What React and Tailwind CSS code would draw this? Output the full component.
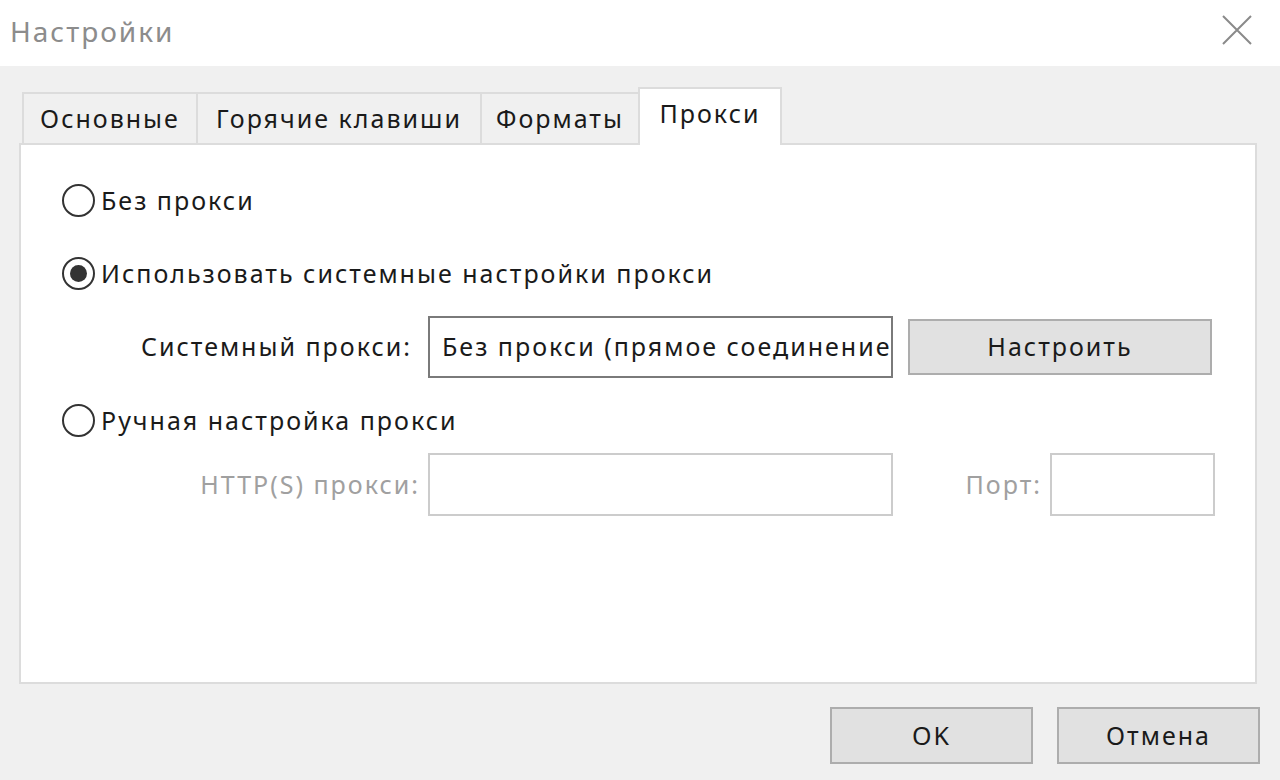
import React from "react";

const font = { fontFamily: '"Noto Sans", "Open Sans", sans-serif' };

function Radio({ checked }) {
  return (
    <span className="relative flex h-[33px] w-[33px] shrink-0 items-center justify-center rounded-full border-2 border-[#333333] bg-white">
      {checked && <span className="h-[17px] w-[17px] rounded-full bg-[#333333]" />}
    </span>
  );
}

export default function App() {
  return (
    <div className="flex h-[780px] w-[1280px] flex-col overflow-hidden bg-[#f0f0f0] tracking-[2px] text-[#1a1a1a]" style={font}>
      {/* title bar */}
      <div className="flex h-[66px] shrink-0 items-start justify-between bg-white pl-[10px] pr-[28px] pt-[15px]">
        <span className="text-[28px] leading-[32px] text-[#8c8c8c]">Настройки</span>
        <svg width="30" height="30" viewBox="0 0 30 30">
          <path d="M1 1 L29 29 M29 1 L1 29" stroke="#8a8a8a" strokeWidth="2" fill="none" />
        </svg>
      </div>

      {/* tabs */}
      <div className="flex h-[77px] shrink-0 items-end pl-[22px]">
        <div className="flex h-[51px] w-[174px] items-center justify-center border-t-2 border-l-2 border-[#dcdcdc] bg-[#f0f0f0] text-[25px]">Основные</div>
        <div className="flex h-[51px] w-[284px] items-center justify-center border-t-2 border-l-2 border-[#dcdcdc] bg-[#f0f0f0] text-[25px]">Горячие клавиши</div>
        <div className="flex h-[51px] w-[158px] items-center justify-center border-t-2 border-l-2 border-[#dcdcdc] bg-[#f0f0f0] text-[25px]">Форматы</div>
        <div className="relative z-10 -mb-[2px] flex h-[58px] w-[144px] items-start justify-center border-x-2 border-t-2 border-[#dcdcdc] bg-white pt-[6px] text-[25px]">Прокси</div>
      </div>

      {/* panel */}
      <div className="ml-[19px] h-[541px] w-[1238px] shrink-0 border-2 border-[#dcdcdc] bg-white pl-[41px] text-[25px]">
        <div className="mt-[39px] flex h-[33px] items-center gap-[6px]">
          <Radio />
          <span>Без прокси</span>
        </div>
        <div className="mt-[40px] flex h-[33px] items-center gap-[6px]">
          <Radio checked />
          <span>Использовать системные настройки прокси</span>
        </div>
        <div className="mt-[26px] flex h-[62px] items-center">
          <span className="w-[366px] pr-[16px] text-right">Системный прокси:</span>
          <div className="flex h-[62px] w-[465px] items-center overflow-hidden whitespace-nowrap border-2 border-[#7a7a7a] pl-[12px]">
            Без прокси (прямое соединение)
          </div>
          <div className="ml-[15px] flex h-[56px] w-[304px] items-center justify-center border-2 border-[#adadad] bg-[#e1e1e1]">
            Настроить
          </div>
        </div>
        <div className="mt-[26px] flex h-[33px] items-center gap-[6px]">
          <Radio />
          <span>Ручная настройка прокси</span>
        </div>
        <div className="mt-[16px] flex h-[63px] items-center">
          <span className="w-[366px] pr-[8px] text-right text-[#a0a0a0]">HTTP(S) прокси:</span>
          <div className="h-[63px] w-[465px] border-2 border-[#cccccc]" />
          <span className="w-[157px] pr-[8px] text-right text-[#a0a0a0]">Порт:</span>
          <div className="h-[63px] w-[165px] border-2 border-[#cccccc]" />
        </div>
      </div>

      {/* buttons */}
      <div className="flex justify-end gap-[24px] pr-[20px] pt-[23px]">
        <div className="flex h-[57px] w-[203px] items-center justify-center border-2 border-[#adadad] bg-[#e1e1e1] text-[25px]">OK</div>
        <div className="flex h-[57px] w-[203px] items-center justify-center border-2 border-[#adadad] bg-[#e1e1e1] text-[25px]">Отмена</div>
      </div>
    </div>
  );
}
